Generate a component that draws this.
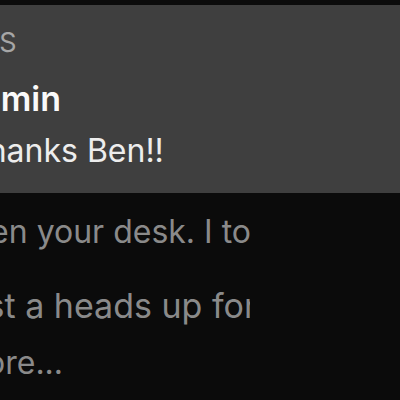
import React from 'react';

const font = { fontFamily: 'Inter, "Noto Sans", sans-serif' };

export default function App() {
  return (
    <div className="w-[400px] h-[400px] overflow-hidden bg-[#0b0b0b] pt-[5px]" style={font}>
      {/* Selected notification */}
      <div className="h-[188px] bg-[#3f3f3f] overflow-hidden whitespace-nowrap pt-[22px]">
        <div className="-ml-[130px] h-[32px] text-[27px] leading-[32px] text-[#a6a6a6]">MESSAGES</div>
        <div className="-ml-[91px] mt-[18px] h-[44px] text-[34px] leading-[44px] font-semibold text-[#fafafa]">
          Benjamin
        </div>
        <div className="-ml-[33px] mt-[12px] h-[36px] text-[32px] leading-[36px] text-[#ededed]">Thanks Ben!!</div>
      </div>

      {/* Older previews, clipped */}
      <div className="w-[250px] overflow-hidden whitespace-nowrap leading-[40px] text-[#8a8a8a]">
        <div className="-ml-[54px] mt-[19px] text-[32px]">Open your desk. I took the files home</div>
        <div className="-ml-[53px] mt-[34px] text-[34px]">Just a heads up for tomorrow</div>
        <div className="-ml-[42px] mt-[17px] text-[32px]">more...</div>
      </div>
    </div>
  );
}
